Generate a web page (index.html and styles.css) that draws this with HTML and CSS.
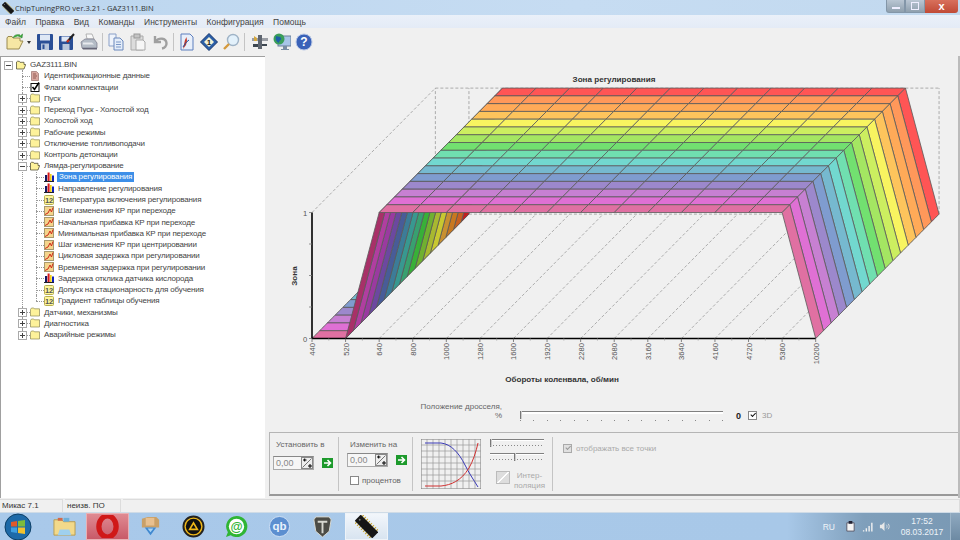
FILE: index.html
```html
<!doctype html>
<html lang="ru">
  <head>
    <meta charset="UTF-8" />
    <title>ChipTuningPRO ver.3.21 - GAZ3111.BIN</title>
    <link rel="stylesheet" href="styles.css">
  </head>
  <body>
    <!-- icon sprites -->
    <svg class="sprites" width="0" height="0">
      <symbol id="i-folder" viewBox="0 0 10 10"><path d="M.5 2.5V9h9V1.800H4.500L3.800 1H1.500z" fill="#fdf29a" stroke="#8d8a55" stroke-width=".7"/></symbol>
      <symbol id="i-folder-open" viewBox="0 0 10 10"><path d="M.5 2V9h7.500L9.700 4.500H8V2.300H4L3.300 1.300H1.300z" fill="#fdf29a" stroke="#55533a" stroke-width=".8"/></symbol>
      <symbol id="i-bars" viewBox="0 0 10 10"><path d="M0 9.500h10" stroke="#222"/><rect x="1" y="3" width="2.200" height="6" fill="#151560"/><rect x="3.600" y=".5" width="2" height="8.500" fill="#d81818"/><rect x="6" y="2" width="1.600" height="7" fill="#f0d010"/><rect x="8" y="3.500" width="2" height="5.500" fill="#1020c0"/></symbol>
      <symbol id="i-num" viewBox="0 0 10 10"><rect x=".5" y=".5" width="9" height="9" rx="1" fill="#fdf59a" stroke="#b8ae50"/><text x="5" y="8" class="num-text">12</text></symbol>
      <symbol id="i-curve" viewBox="0 0 10 10"><rect x=".5" y=".5" width="9" height="9" fill="#f4d58c" stroke="#a89a70"/><path d="M1 8.500 4 7 6 3l1.500 3L9 1.500" fill="none" stroke="#d02818" stroke-width="1"/></symbol>
      <symbol id="i-data" viewBox="0 0 10 10"><path d="M1.500.5h5l2 2V9.500h-7z" fill="#d8a8a0" stroke="#98706c" stroke-width=".7"/><path d="M3 3h3M3 5h4M3 7h3" stroke="#7a3a30" stroke-width=".7"/></symbol>
      <symbol id="i-check" viewBox="0 0 10 10"><rect x="1" y="1.500" width="8" height="8" fill="#fff" stroke="#111"/><path d="M2.500 5l2 2.500L9 .5" fill="none" stroke="#000" stroke-width="1.600"/></symbol>
      <symbol id="i-go" viewBox="0 0 11 10"><rect width="11" height="10" fill="#1d9a2c"/><path d="M2 5h6M5.500 2l3 3-3 3" fill="none" stroke="#fff" stroke-width="1.600"/></symbol>
      <symbol id="i-spin" viewBox="0 0 12 12"><rect x=".5" y=".5" width="11" height="11" fill="#eee" stroke="#888"/><path d="M1.500 10.500l9-9" stroke="#555" stroke-width=".8"/><path d="M2 3h3.500M3.700 1.500v3M7 9h4M9 7v4" stroke="#000" stroke-width="1"/></symbol>
      <symbol id="i-chip" viewBox="0 0 24 24"><g transform="rotate(45 12 12)"><path d="M1.500 5.500v13M4.500 5.500v13M7.500 5.500v13M10.500 5.500v13M13.500 5.500v13M16.500 5.500v13M19.500 5.500v13M22.500 5.500v13" stroke="#c9a93a" stroke-width="1.300"/><rect x="-1" y="7.500" width="26" height="9" fill="#161616"/><circle cx="2" cy="12" r="1" fill="#777"/></g></symbol>
    </svg>

    <div class="window">
      <div class="titlebar">
        <svg class="title-icon"><use href="#i-chip"/></svg>
        <span class="title-text">ChipTuningPRO ver.3.21 - GAZ3111.BIN</span>
        <div class="win-buttons">
          <div class="win-btn win-min"><span class="glyph-min"></span></div>
          <div class="win-btn win-max"><span class="glyph-max"></span></div>
          <div class="win-btn win-close">x</div>
        </div>
      </div>

      <div class="menubar">
        <span>Файл</span><span>Правка</span><span>Вид</span><span>Команды</span><span>Инструменты</span><span>Конфигурация</span><span>Помощь</span>
      </div>

      <div class="toolbar">
        <svg class="tool" viewBox="0 0 18 18"><path d="M1 5v11h12l4-8h-3V5H7L6 3.500H2z" fill="#f6e7a4" stroke="#9a8a50"/><path d="M7 5c1-3 4-4 7-3l-1.500 1 3.500 2 .5-4-1.200 1" fill="#3fae3f" stroke="#2a7d2a" stroke-width=".6"/></svg>
        <span class="tool-drop"></span>
        <svg class="tool" viewBox="0 0 18 18"><rect x="1" y="1" width="16" height="16" rx="1" fill="#2a4f96"/><rect x="4" y="1.500" width="10" height="6" fill="#dfe8f5"/><rect x="5" y="10.500" width="8" height="6.500" fill="#b8c6dc"/><rect x="6.500" y="11.500" width="2" height="4.500" fill="#2a4f96"/></svg>
        <svg class="tool" viewBox="0 0 18 18"><rect x="1" y="3" width="14" height="14" rx="1" fill="#2a4f96"/><rect x="3.500" y="3.500" width="8" height="5" fill="#dfe8f5"/><rect x="4.500" y="11" width="7" height="6" fill="#b8c6dc"/><path d="M9 9l7-8" stroke="#222" stroke-width="2"/><path d="M9 9l2-2" stroke="#d03020" stroke-width="2"/></svg>
        <svg class="tool" viewBox="0 0 18 18"><path d="M6 1h6l2 5H7z" fill="#f8f8f8" stroke="#999" stroke-width=".7"/><path d="M1 9l4-3h9l3 4v5H2z" fill="#b4bcc6" stroke="#778" stroke-width=".7"/><path d="M3 9.500h9l2 2H3z" fill="#e8eaee"/><path d="M2 15h15v1.500H3z" fill="#667"/></svg>
        <span class="tool-sep"></span>
        <svg class="tool" viewBox="0 0 18 18"><path d="M2 1h7v12H2z" fill="#eef3fb" stroke="#8aa0c8"/><path d="M7 5h6l3 3v9H7z" fill="#e4edf9" stroke="#6a88bc"/><path d="M9 9h5M9 11.500h5M9 14h5" stroke="#7a97c7"/></svg>
        <svg class="tool" viewBox="0 0 18 18"><path d="M2 3h12v14H2z" fill="#dcdcdc" stroke="#aaa"/><rect x="5" y="1" width="6" height="4" fill="#c4c4c4" stroke="#999"/><path d="M7 7h7l2 2v8H7z" fill="#f6f6f6" stroke="#aaa"/></svg>
        <svg class="tool" viewBox="0 0 18 18"><path d="M4 3v6h6M4.500 8.500C8 4 15 5 15.500 10c.3 3-2 5-4.500 5.500" fill="none" stroke="#a0a0a0" stroke-width="2.400"/></svg>
        <span class="tool-sep"></span>
        <svg class="tool" viewBox="0 0 18 18"><path d="M3 1h9l3 3v13H3z" fill="#e8effa" stroke="#5d7fbe"/><path d="M5 16l2-9 1.500-3L9 8l-1 4z" fill="#c83a2a"/><path d="M5 14c2-3 3-5 6-7" fill="none" stroke="#224f9e"/></svg>
        <svg class="tool" viewBox="0 0 18 18"><path d="M9 .5 17.500 9 9 17.500.5 9z" fill="#2b5fa8" stroke="#15356b"/><path d="M9 4l5 5-5 5-5-5z" fill="#f3f3d8"/><text x="9" y="12" class="tool-num">1</text></svg>
        <svg class="tool" viewBox="0 0 18 18"><circle cx="11" cy="7" r="5.500" fill="#e3f1fb" stroke="#9fb3c6" stroke-width="1.400"/><path d="M7 11l-5 5" stroke="#d59a3e" stroke-width="2.400"/></svg>
        <span class="tool-sep"></span>
        <svg class="tool tool-wide" viewBox="0 0 18 18"><path d="M1 5h16v3H1z" fill="#9a9da4"/><path d="M7 2h4v14H7z" fill="#5f6670"/><path d="M3 3l3 2v3H3z" fill="#d5a83e"/><path d="M11 11h5v2h-5zM2 11h5v3H2z" fill="#3c4650"/></svg>
        <svg class="tool" viewBox="0 0 18 18"><rect x="5" y="3" width="13" height="10" fill="#a8c5e8" stroke="#6a7f98"/><path d="M10 13h4v3h2v1H8v-1h2z" fill="#7a8da4"/><circle cx="6" cy="6" r="5.500" fill="#3a9e5a"/><path d="M3 3c2 1 4 0 5 2s-2 2-2 5c-2-1-4-3-3-7z" fill="#1d5fa8"/></svg>
        <svg class="tool" viewBox="0 0 18 18"><circle cx="9" cy="9" r="8" fill="#3a62b8" stroke="#b9c8e6"/><text x="9" y="13" class="tool-help">?</text></svg>
      </div>

      <div class="workspace">
        <div class="tree">
          <ul class="root">
            <li class="open">
              <div class="node"><span class="exp minus"></span><svg class="ic"><use href="#i-folder-open"/></svg><span>GAZ3111.BIN</span></div>
              <ul>
                <li><div class="node"><svg class="ic"><use href="#i-data"/></svg><span>Идентификационные данные</span></div></li>
                <li><div class="node"><svg class="ic"><use href="#i-check"/></svg><span>Флаги комплектации</span></div></li>
                <li><div class="node"><span class="exp plus"></span><svg class="ic"><use href="#i-folder"/></svg><span>Пуск</span></div></li>
                <li><div class="node"><span class="exp plus"></span><svg class="ic"><use href="#i-folder"/></svg><span>Переход Пуск - Холостой ход</span></div></li>
                <li><div class="node"><span class="exp plus"></span><svg class="ic"><use href="#i-folder"/></svg><span>Холостой ход</span></div></li>
                <li><div class="node"><span class="exp plus"></span><svg class="ic"><use href="#i-folder"/></svg><span>Рабочие режимы</span></div></li>
                <li><div class="node"><span class="exp plus"></span><svg class="ic"><use href="#i-folder"/></svg><span>Отключение топливоподачи</span></div></li>
                <li><div class="node"><span class="exp plus"></span><svg class="ic"><use href="#i-folder"/></svg><span>Контроль детонации</span></div></li>
                <li>
                  <div class="node"><span class="exp minus"></span><svg class="ic"><use href="#i-folder-open"/></svg><span>Лямда-регулирование</span></div>
                  <ul>
                    <li><div class="node"><svg class="ic"><use href="#i-bars"/></svg><span class="selected">Зона регулирования</span></div></li>
                    <li><div class="node"><svg class="ic"><use href="#i-bars"/></svg><span>Направление регулирования</span></div></li>
                    <li><div class="node"><svg class="ic"><use href="#i-num"/></svg><span>Температура включения регулирования</span></div></li>
                    <li><div class="node"><svg class="ic"><use href="#i-curve"/></svg><span>Шаг изменения КР при переходе</span></div></li>
                    <li><div class="node"><svg class="ic"><use href="#i-curve"/></svg><span>Начальная прибавка КР при переходе</span></div></li>
                    <li><div class="node"><svg class="ic"><use href="#i-curve"/></svg><span>Минимальная прибавка КР при переходе</span></div></li>
                    <li><div class="node"><svg class="ic"><use href="#i-curve"/></svg><span>Шаг изменения КР при центрировании</span></div></li>
                    <li><div class="node"><svg class="ic"><use href="#i-curve"/></svg><span>Цикловая задержка при регулировании</span></div></li>
                    <li><div class="node"><svg class="ic"><use href="#i-curve"/></svg><span>Временная задержка при регулировании</span></div></li>
                    <li><div class="node"><svg class="ic"><use href="#i-bars"/></svg><span>Задержка отклика датчика кислорода</span></div></li>
                    <li><div class="node"><svg class="ic"><use href="#i-num"/></svg><span>Допуск на стационарность для обучения</span></div></li>
                    <li><div class="node"><svg class="ic"><use href="#i-num"/></svg><span>Градиент таблицы обучения</span></div></li>
                  </ul>
                </li>
                <li><div class="node"><span class="exp plus"></span><svg class="ic"><use href="#i-folder"/></svg><span>Датчики, механизмы</span></div></li>
                <li><div class="node"><span class="exp plus"></span><svg class="ic"><use href="#i-folder"/></svg><span>Диагностика</span></div></li>
                <li><div class="node"><span class="exp plus"></span><svg class="ic"><use href="#i-folder"/></svg><span>Аварийные режимы</span></div></li>
              </ul>
            </li>
          </ul>
        </div>

        <div class="main">
          <svg id="chart" class="chart" viewBox="268 57 692 340">
            <text x="614" y="83" class="chart-title">Зона регулирования</text>
            <text x="562" y="383" class="chart-title">Обороты коленвала, об/мин</text>
            <text transform="translate(297 277) rotate(-90)" class="chart-title">Зона</text>
            <g id="chart-body"></g>
          </svg>

          <div class="throttle">
            <div class="throttle-label">Положение дросселя,<br />%</div>
            <div class="slider wide"></div>
            <b class="throttle-value">0</b>
            <span class="box checked"></span>
            <span class="muted">3D</span>
          </div>

          <div class="controls">
            <div class="section sec-set">
              <div class="label">Установить в</div>
              <div class="spin-row">
                <div class="spin">0,00<svg class="spin-btn"><use href="#i-spin"/></svg></div>
                <svg class="go"><use href="#i-go"/></svg>
              </div>
            </div>
            <div class="section sec-change">
              <div class="label">Изменить на</div>
              <div class="spin-row">
                <div class="spin">0,00<svg class="spin-btn"><use href="#i-spin"/></svg></div>
                <svg class="go"><use href="#i-go"/></svg>
              </div>
              <div class="check-row"><span class="box"></span><span>процентов</span></div>
            </div>
            <div class="section sec-interp">
              <svg class="mini-plot" viewBox="0 0 60 50">
                <path d="M0 0h60v50H0z" fill="#f0f0f0" stroke="#777"/>
                <path fill="none" stroke="#999" stroke-width=".7" d="M6 0v50M12 0v50M18 0v50M24 0v50M30 0v50M36 0v50M42 0v50M48 0v50M54 0v50M0 6h60M0 12h60M0 18h60M0 24h60M0 30h60M0 36h60M0 42h60"/>
                <path d="M4 4h16c10 1 18 10 24 22 4 8 8 14 13 22" fill="none" stroke="#3a3ab8"/>
                <path d="M4 47h16c10-1 20-5 28-18 4-7 7-16 9-25" fill="none" stroke="#d03030"/>
              </svg>
              <div class="interp-side">
                <div class="slider mini"></div>
                <div class="slider mini second"></div>
                <div class="interp-row">
                  <span class="interp-btn"></span>
                  <span class="muted interp-text">Интер-<br />поляция</span>
                </div>
              </div>
            </div>
            <div class="section sec-points">
              <span class="box disabled"></span>
              <span class="muted">отображать все точки</span>
            </div>
          </div>
        </div>
      </div>

      <div class="statusbar">
        <div class="status-cell cell-a">Микас 7.1</div>
        <div class="status-cell cell-b">неизв. ПО</div>
        <div class="status-cell cell-c"></div>
      </div>
    </div>

    <div class="taskbar">
      <svg class="orb" viewBox="0 0 28 28">
        <circle cx="14" cy="14" r="13" fill="#1e6aa8" stroke="#0d3f66"/>
        <path d="M7 9l6-1v5.500H7z" fill="#e05a2a"/>
        <path d="M14 8l7-1v6.500h-7z" fill="#7dbb3c"/>
        <path d="M7 14.500h6V20l-6-1z" fill="#3f9fe0"/>
        <path d="M14 14.500h7V21l-7-1z" fill="#f3c22e"/>
      </svg>
      <div class="task">
        <svg class="task-icon" viewBox="0 0 24 24"><path d="M1 5h8l2 2h12v14H1z" fill="#f2d98a" stroke="#b79c50"/><rect x="5" y="3" width="5" height="3" fill="#d06a4a"/><rect x="11" y="3" width="6" height="4" fill="#6fb0d8"/><path d="M7 15h10l2 6H5z" fill="#9fd0ee"/></svg>
      </div>
      <div class="task task-opera">
        <svg class="task-icon" viewBox="0 0 24 24"><ellipse cx="12" cy="12" rx="9" ry="11" fill="none" stroke="#d01818" stroke-width="5.500"/></svg>
      </div>
      <div class="task">
        <svg class="task-icon" viewBox="0 0 24 24"><path d="M3 4l6-2h9l3 3v8H3z" fill="#c9a068"/><path d="M7 3h9v8H7z" fill="#e8c090"/><path d="M6 13h12l-6 8z" fill="#3f88d0"/><path d="M9 14h6l-3 4z" fill="#a9d4f5"/></svg>
      </div>
      <div class="task">
        <svg class="task-icon" viewBox="0 0 24 24"><circle cx="12" cy="12" r="10.500" fill="#f0b818" stroke="#222" stroke-width="2"/><circle cx="12" cy="12" r="8" fill="#111"/><path d="M12 6.500 17.500 16h-11zM12 10l-2.500 4h5z" fill="#f0b818" fill-rule="evenodd"/></svg>
      </div>
      <div class="task">
        <svg class="task-icon" viewBox="0 0 24 24"><path d="M12 1a11 11 0 1 1-6 20l-5 2 2-5A11 11 0 0 1 12 1z" fill="#2fb534"/><circle cx="12" cy="12" r="8" fill="#fff"/><text x="12" y="16.500" class="task-at">@</text></svg>
      </div>
      <div class="task">
        <svg class="task-icon" viewBox="0 0 24 24"><circle cx="12" cy="12" r="10.500" fill="#5c8fd0" stroke="#cfe0f4"/><text x="12" y="16" class="task-qb">qb</text></svg>
      </div>
      <div class="task">
        <svg class="task-icon" viewBox="0 0 24 24"><path d="M5 2h14l2 3-2 12-7 6-7-6L3 5z" fill="#4c4c46" stroke="#d8d8d0"/><path d="M7 6h10v2h-4v11h-2V8H7z" fill="#d8d8d0"/></svg>
      </div>
      <div class="task task-active">
        <svg class="task-icon" viewBox="0 0 24 24"><use href="#i-chip"/></svg>
      </div>

      <div class="tray">
        <span class="tray-lang">RU</span>
        <svg class="tray-icon" viewBox="0 0 12 12"><path d="M2 2h8v9H2z" fill="#f4f4f4" stroke="#556"/><rect x="4" y="0" width="4" height="3" fill="#223"/></svg>
        <svg class="tray-icon" viewBox="0 0 12 12"><path d="M1 10h1.500v1.500H1zM4 8h1.500v3.500H4zM7 5.500h1.500v6H7zM10 2h1.500v9.500H10z" fill="#f2f2f2"/></svg>
        <svg class="tray-icon" viewBox="0 0 12 12"><path d="M1 4h2l3-3v10L3 8H1z" fill="#e8e8e8"/><path d="M8 4c1 1 1 3 0 4M10 3c1.500 2 1.500 4 0 6" fill="none" stroke="#e0e0e0"/></svg>
        <div class="clock">17:52<br />08.03.2017</div>
        <div class="show-desktop"></div>
      </div>
    </div>

    <script src="chart.js"></script>
  </body>
</html>
```

FILE: styles.css
```css
body {
  margin: 0;
  padding: 0;
  width: 960px;
  height: 540px;
  overflow: hidden;
  display: flex;
  flex-direction: column;
  background-color: #f0f0f0;
  color: #444;
  font-family: "Liberation Sans", sans-serif;
  font-size: 8px;
}

.sprites {
  display: none;
}

.window {
  flex: 1;
  display: flex;
  flex-direction: column;
  min-height: 0;
}

/* title bar */
.titlebar {
  height: 15px;
  display: flex;
  align-items: center;
  padding-left: 2px;
  background: linear-gradient(to right, #bcd6ef, #c6dcf2 60%, #c2d9ef);
}

.title-icon {
  width: 12px;
  height: 12px;
}

.title-text {
  margin-left: 1px;
  font-family: "Open Sans", sans-serif;
  font-size: 7.6px;
  color: #333;
}

.win-buttons {
  margin-left: auto;
  margin-right: 2px;
  align-self: flex-start;
  display: flex;
  height: 13px;
}

.win-btn {
  display: flex;
  align-items: center;
  justify-content: center;
  width: 20px;
  background: linear-gradient(#b9c6d3, #8fa0ae);
  border: 1px solid #8396a8;
  border-top: 0;
  box-sizing: border-box;
}

.win-min {
  width: 19px;
  border-radius: 0 0 0 3px;
}

.win-close {
  width: 33px;
  border: 0;
  border-radius: 0 0 3px 0;
  background: linear-gradient(#d8705c, #c04a36);
  color: #fff;
  font-size: 11px;
  font-weight: bold;
  line-height: 11px;
}

.glyph-min {
  width: 8px;
  height: 2px;
  margin-top: 4px;
  background: #eef;
}

.glyph-max {
  width: 6px;
  height: 6px;
  border: 1px solid #eef;
}

/* menu */
.menubar {
  height: 13px;
  display: flex;
  align-items: center;
  gap: 9.5px;
  padding-left: 5px;
  background: linear-gradient(#eaf0f9, #e4ebf6);
  color: #444;
  font-size: 8.5px;
}

/* toolbar */
.toolbar {
  height: 28px;
  display: flex;
  align-items: center;
  gap: 4px;
  padding-left: 6px;
  background: #f0f0f0;
  box-sizing: border-box;
}

.tool {
  width: 18px;
  height: 18px;
  flex: none;
}

.tool-wide {
  margin-left: 2px;
}

.tool-drop {
  width: 0;
  height: 0;
  margin: 0 1px 0 -1px;
  border: 2.5px solid transparent;
  border-top: 3px solid #333;
  border-bottom: 0;
}

.tool-sep {
  width: 1px;
  height: 18px;
  background: #c4c4c4;
}

.tool-num {
  font: bold 8px "Liberation Sans", sans-serif;
  text-anchor: middle;
  fill: #222;
}

.tool-help {
  font: bold 12px "Liberation Sans", sans-serif;
  text-anchor: middle;
  fill: #fff;
}

.workspace {
  flex: 1;
  display: flex;
  min-height: 0;
}

/* tree */
.tree {
  width: 265px;
  flex: none;
  padding-top: 2px;
  box-sizing: border-box;
  background: #fff;
  border-left: 1px solid #a0a0a0;
  border-top: 1px solid #a0a0a0;
  overflow: hidden;
  white-space: nowrap;
  font-size: 8px;
  letter-spacing: -0.15px;
}

.tree ul {
  list-style: none;
  margin: 0;
  padding: 0;
}

.tree li {
  position: relative;
  padding-left: 14px;
}

.root > li {
  padding-left: 0;
}

.root > li > ul {
  padding-left: 15px;
}

.node {
  position: relative;
  height: 11.25px;
  display: flex;
  align-items: center;
  gap: 4px;
}

.root > li > .node {
  padding-left: 15px;
}

/* connector lines */
.tree ul ul > li::before {
  content: "";
  position: absolute;
  left: 6px;
  top: 0;
  bottom: 0;
  border-left: 1px dotted #999;
}

.tree ul ul > li:last-child::before {
  bottom: auto;
  height: 6px;
}

.tree ul ul > li > .node::before {
  content: "";
  position: absolute;
  left: -8px;
  width: 8px;
  top: 5.5px;
  border-top: 1px dotted #999;
}

.exp {
  position: absolute;
  left: -12px;
  top: 1.5px;
  width: 7px;
  height: 7px;
  border: 1px solid #aaa;
  background-color: #fff;
  z-index: 1;
}

.root > li > .node > .exp {
  left: 3px;
}

.exp.minus {
  background-image: linear-gradient(#444, #444);
  background-repeat: no-repeat;
  background-size: 5px 1px;
  background-position: center;
}

.exp.plus {
  background-image: linear-gradient(#444, #444), linear-gradient(#444, #444);
  background-repeat: no-repeat;
  background-size: 5px 1px, 1px 5px;
  background-position: center;
}

.ic {
  width: 10px;
  height: 10px;
  flex: none;
}

.num-text {
  font: bold 7.5px "Liberation Sans", sans-serif;
  text-anchor: middle;
  fill: #555;
}

.selected {
  background: #3d8fe8;
  color: #fff;
  padding: 0 2px;
  margin-left: -1px;
  line-height: 10px;
}

/* right side */
.main {
  flex: 1;
  display: flex;
  flex-direction: column;
  min-width: 0;
  margin-left: 3px;
  border-right: 2px solid #bbb;
}

.chart {
  width: 692px;
  height: 340px;
  flex: none;
}

.chart-title {
  font: bold 8.1px "Liberation Sans", sans-serif;
  text-anchor: middle;
  fill: #333;
}

.axis-label {
  font: 7.6px "Liberation Sans", sans-serif;
  fill: #555;
}

.throttle {
  height: 36px;
  flex: none;
  display: flex;
  align-items: flex-start;
  box-sizing: border-box;
  padding: 7px 0 0 130px;
  color: #666;
}

.throttle-label {
  width: 104px;
  text-align: right;
  line-height: 8.5px;
}

.slider {
  position: relative;
  border-top: 1px solid #808080;
  background: #fff;
  height: 2px;
}

.slider::after {
  content: "";
  position: absolute;
  left: 0;
  right: 0;
  top: 8px;
  height: 1px;
  background-image: repeating-linear-gradient(to right, #888 0 1px, transparent 1px 13.500px);
}

.slider::before {
  content: "";
  position: absolute;
  left: 0;
  top: -1px;
  width: 2px;
  height: 8px;
  border-left: 1px solid #777;
  border-right: 1px solid #ccc;
  box-sizing: border-box;
}

.slider.wide {
  width: 203px;
  margin: 8px 0 0 18px;
}

.throttle-value {
  margin: 8px 0 0 13px;
  color: #222;
  font-size: 9px;
}

.throttle .box {
  margin: 8px 5px 0 7px;
}

.throttle .muted {
  margin-top: 8px;
  color: #999;
}

.box {
  display: inline-block;
  width: 9px;
  height: 9px;
  box-sizing: border-box;
  flex: none;
  background: #fff;
  border: 1px solid #888;
  position: relative;
}

.box.checked::after,
.box.disabled::after {
  content: "";
  position: absolute;
  left: 1px;
  top: 0;
  width: 4px;
  height: 2px;
  border-left: 1.500px solid #111;
  border-bottom: 1.500px solid #111;
  transform: rotate(-45deg) translate(0, 1px);
}

.box.disabled {
  background: #e0e0e0;
  border-color: #aaa;
}

.box.disabled::after {
  border-color: #999;
}

.muted {
  color: #aaa;
}

/* bottom control panel */
.controls {
  flex: 1;
  display: flex;
  margin: 0 0 2px 1px;
  border: 1px solid #b5b5b5;
  border-bottom-color: #999;
  border-right: 0;
  border-bottom-width: 2px;
  color: #666;
}

.section {
  box-sizing: border-box;
  margin: 4px 0 3px;
  border-right: 1px solid #c4c4c4;
}

.sec-set {
  width: 69px;
  padding: 3px 0 0 3px;
}

.sec-set .label {
  padding-left: 3px;
}

.sec-set .spin-row {
  margin-top: 7px;
}

.sec-change {
  width: 74px;
  padding: 3px 0 0 8px;
}

.sec-change .label {
  padding-left: 3px;
}

.sec-change .spin-row {
  margin-top: 4px;
}

.spin-row {
  display: flex;
  align-items: center;
  gap: 8px;
}

.spin {
  width: 41px;
  height: 14px;
  box-sizing: border-box;
  display: flex;
  align-items: center;
  justify-content: space-between;
  padding-left: 2px;
  background: #f6f6f6;
  border: 1px solid #aaa;
  border-top-color: #888;
  color: #888;
  font-size: 9px;
}

.spin-btn {
  width: 12px;
  height: 12px;
}

.go {
  width: 11px;
  height: 10px;
}

.check-row {
  display: flex;
  align-items: center;
  gap: 3px;
  margin: 9px 0 0 3px;
}

.sec-interp {
  width: 140px;
  display: flex;
  gap: 9px;
  padding: 2px 0 0 8px;
}

.mini-plot {
  width: 60px;
  height: 50px;
  flex: none;
}

.interp-side {
  width: 54px;
}

.slider.mini {
  margin-top: 0;
  height: 1px;
}

.slider.mini::after {
  background-image: repeating-linear-gradient(to right, #888 0 1px, transparent 1px 3px);
  top: 5px;
}

.slider.mini.second {
  margin-top: 12px;
}

.slider.mini.second::before {
  left: 24px;
}

.interp-row {
  display: flex;
  align-items: flex-start;
  gap: 4px;
  margin: 16px 0 0 6px;
}

.interp-btn {
  width: 14px;
  height: 13px;
  box-sizing: border-box;
  flex: none;
  border: 1px solid #bbb;
  background: linear-gradient(135deg, #ddd 46%, #fff 48% 54%, #ddd 56%);
}

.interp-text {
  text-align: center;
  line-height: 10px;
}

.sec-points {
  flex: 1;
  border-right: 0;
  display: flex;
  align-items: flex-start;
  gap: 4px;
  padding: 7px 0 0 10px;
}

/* status bar */
.statusbar {
  height: 14px;
  flex: none;
  display: flex;
  gap: 2px;
  padding-top: 1px;
  box-sizing: border-box;
  background: #f0f0f0;
}

.status-cell {
  box-sizing: border-box;
  padding: 0 2px;
  border: 1px solid #dcdcdc;
  border-width: 1px 1px 0 0;
  color: #333;
  line-height: 12px;
}

.cell-a {
  width: 63px;
}

.cell-b {
  width: 56px;
}

.cell-c {
  flex: 1;
}

/* taskbar */
.taskbar {
  height: 28px;
  flex: none;
  display: flex;
  align-items: center;
  background: linear-gradient(to right, #a9c9ea, #a8c8e8 82%, #7f9fbb 90%, #7a99b4);
  border-top: 1px solid #cfdbe6;
  box-sizing: border-box;
}

.orb {
  width: 28px;
  height: 28px;
  margin: 0 11px 0 4px;
  flex: none;
}

.task {
  width: 43px;
  height: 27px;
  display: flex;
  align-items: center;
  justify-content: center;
  flex: none;
}

.task-icon {
  width: 23px;
  height: 23px;
}

.task-opera {
  background: linear-gradient(#e08a92, #c85a68);
  border: 1px solid #e9b0b4;
  box-sizing: border-box;
}

.task-active {
  margin-left: 1px;
  background: linear-gradient(#f2f6fb, #d8e4f0);
  border: 1px solid #eef3f8;
  box-sizing: border-box;
}

.task-at {
  font: bold 13px "Liberation Sans", sans-serif;
  text-anchor: middle;
  fill: #2fb534;
}

.task-qb {
  font: bold 12px "Liberation Sans", sans-serif;
  text-anchor: middle;
  fill: #e8f2fc;
}

.tray {
  margin-left: auto;
  display: flex;
  align-items: center;
  height: 100%;
  color: #eef3f8;
}

.tray-lang {
  margin-right: 10px;
  font-size: 8.5px;
}

.tray-icon {
  width: 11px;
  height: 11px;
  margin-right: 6px;
}

.clock {
  width: 52px;
  text-align: center;
  font-size: 8.5px;
  line-height: 11px;
}

.show-desktop {
  width: 10px;
  height: 100%;
  margin-left: 2px;
  background: linear-gradient(#8fa9c0, #6d8aa3);
  border-left: 1px solid #9db5c9;
  box-sizing: border-box;
}
```

FILE: chart.js
```js
// 3D surface chart, drawn back to front in page coordinates
const NS = 'http://www.w3.org/2000/svg';
const body = document.getElementById('chart-body');

const rpm = [440, 520, 640, 800, 1000, 1280, 1600, 1920, 2280, 2680, 3160, 3640, 4160, 4720, 5360, 10200];
const zone = [0, 0, 1, 1, 1, 1, 1, 1, 1, 1, 1, 1, 1, 1, 1, 0];

// front row first
const light = ['#e070a2', '#df70d4', '#c780d2', '#9c88cc', '#7f9ccf', '#76b9cf', '#72d8cf', '#70dfb0',
  '#72e070', '#a4e662', '#ccee60', '#f8f460', '#fdc45c', '#ffaa58', '#ff985a', '#ff5555'];
const dark = ['#a83068', '#b03ea0', '#9a3aa0', '#6c48a0', '#485c98', '#3c7c98', '#389890', '#38a070',
  '#38b038', '#70b030', '#a8b830', '#c8c830', '#c89030', '#c87820', '#c86020', '#c02020'];

const ROWS = 16;
const STEP_X = 33.58;
const DEPTH_X = 7.71;
const DEPTH_Y = 7.775;
const HEIGHT = 126;
const X0 = 312;
const Y0 = 339.5;

function pt(i, r, h) {
  return [X0 + i * STEP_X + r * DEPTH_X, Y0 - r * DEPTH_Y - h * HEIGHT];
}

function add(tag, attrs, text) {
  const el = document.createElementNS(NS, tag);
  for (const k in attrs) el.setAttribute(k, attrs[k]);
  if (text) el.textContent = text;
  body.appendChild(el);
  return el;
}

function line(a, b, color, width, dash) {
  add('line', {
    x1: a[0], y1: a[1], x2: b[0], y2: b[1],
    stroke: color, 'stroke-width': width, 'stroke-dasharray': dash || 'none',
  });
}

// dashed walls and floor
const DASH = '3 2';
const GRID = '#999';
for (let i = 0; i < rpm.length; i++) {
  line(pt(i, 0, 0), pt(i, ROWS, 0), GRID, 0.8, DASH);
}
line(pt(1, ROWS, 0), pt(15, ROWS, 0), GRID, 0.8, DASH);
line(pt(0, ROWS, 1), pt(15, ROWS, 1), GRID, 0.8, DASH);
line(pt(0, 0, 1), pt(0, ROWS, 1), GRID, 0.8, DASH);
line(pt(0, ROWS, 0), pt(0, ROWS, 1), GRID, 0.8, DASH);
line(pt(1, ROWS, 0), pt(1, ROWS, 1), GRID, 0.8, DASH);
line(pt(15, ROWS, 0), pt(15, ROWS, 1), GRID, 0.8, DASH);

// surface
for (let r = ROWS - 1; r >= 0; r--) {
  for (let i = 0; i < rpm.length - 1; i++) {
    const pts = [pt(i, r, zone[i]), pt(i + 1, r, zone[i + 1]), pt(i + 1, r + 1, zone[i + 1]), pt(i, r + 1, zone[i])];
    add('polygon', {
      points: pts.map((p) => p.join(',')).join(' '),
      fill: i === 1 ? dark[r] : light[r],
      stroke: '#5a5a5a',
      'stroke-width': 0.8,
      'stroke-linejoin': 'round',
    });
  }
}

// axes
line([X0, Y0 - HEIGHT], [X0, Y0 + 0.5], '#000', 1.6);
line([X0, Y0], pt(15, 0, 0), '#000', 1.6);

rpm.forEach((v, i) => {
  const x = X0 + i * STEP_X;
  line([x, Y0], [x, Y0 + 3.5], '#666', 0.8);
  if (i < rpm.length - 1) line([x + STEP_X / 2, Y0], [x + STEP_X / 2, Y0 + 2], '#999', 0.8);
  add('text', {
    class: 'axis-label',
    transform: `translate(${x + 3} 344) rotate(-90)`,
    'text-anchor': 'end',
  }, String(v));
});

[0, 0.25, 0.5, 0.75, 1].forEach((h) => {
  const y = Y0 - h * HEIGHT;
  line([X0 - 3, y], [X0, y], '#777', 0.8);
  if (h === 0 || h === 1) {
    add('text', { class: 'axis-label', x: X0 - 9, y: y + 3 }, String(h));
  }
});
```
